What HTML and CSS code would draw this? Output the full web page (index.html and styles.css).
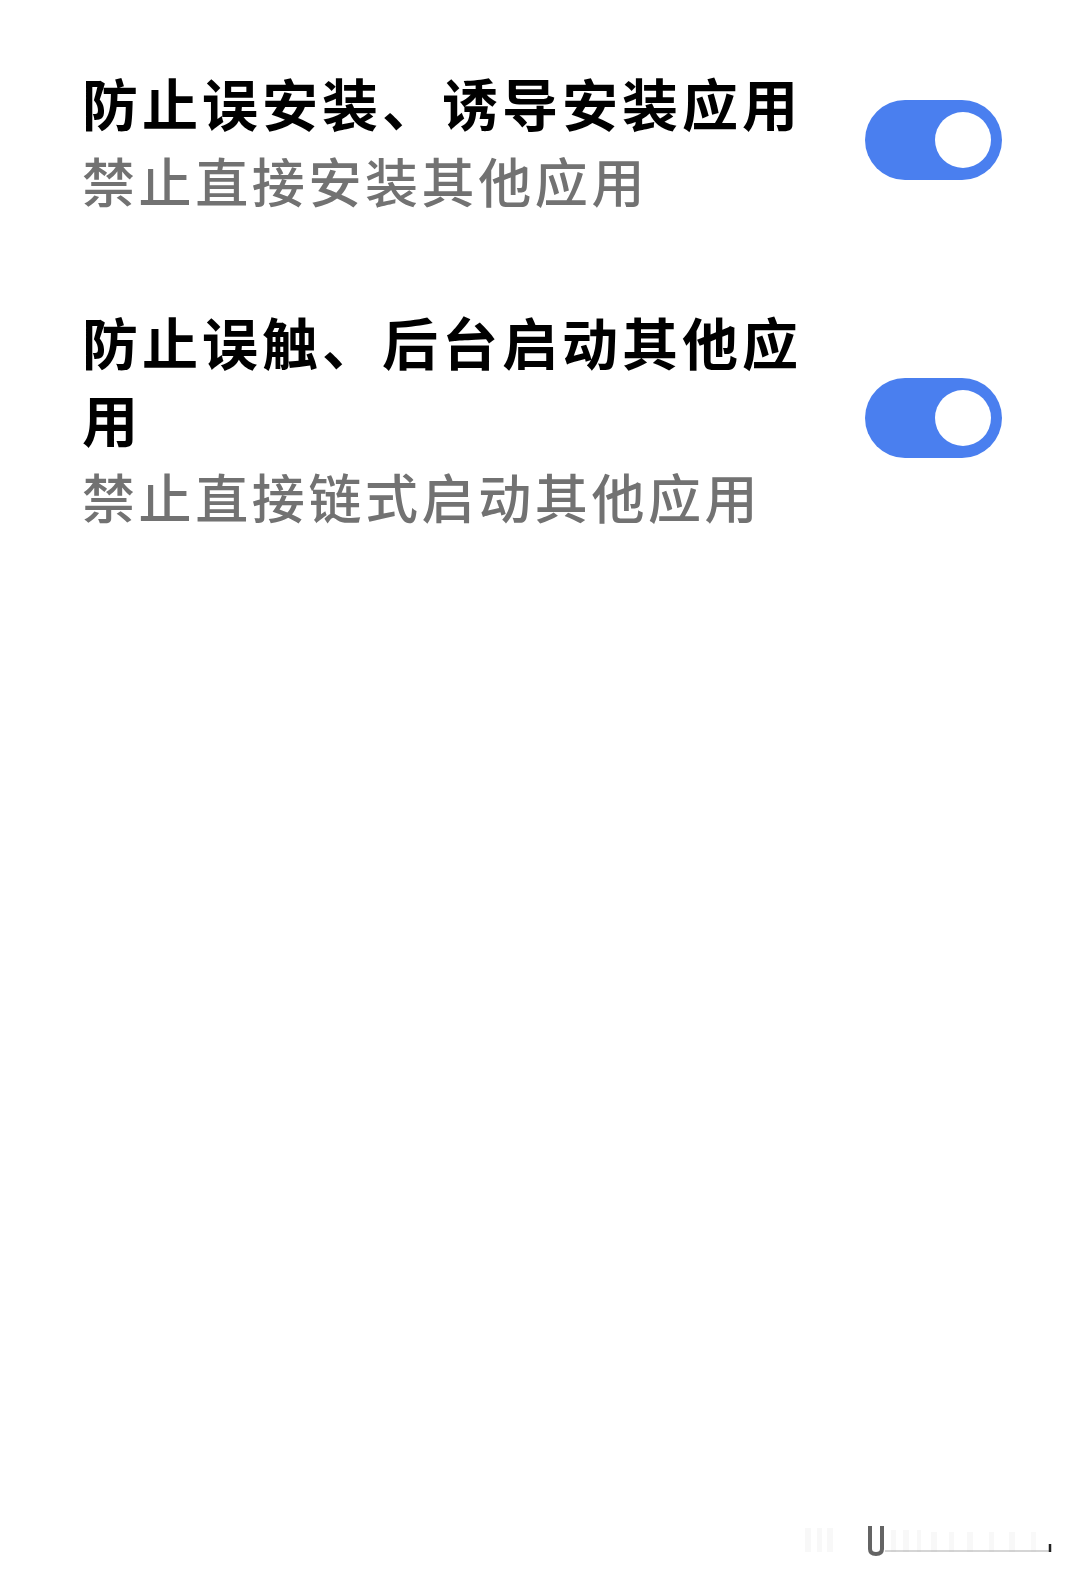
FILE: index.html
```html
<!DOCTYPE html>
<html lang="zh-CN">
<head>
  <meta charset="UTF-8">
  <title>应用安装与启动</title>
  <link rel="stylesheet" href="styles.css">
</head>
<body>
  <div class="settings-list">
    <div class="setting-row">
      <div class="setting-text">
        <div class="setting-title">防止误安装、诱导安装应用</div>
        <div class="setting-desc">禁止直接安装其他应用</div>
      </div>
      <label class="switch">
        <input type="checkbox" checked>
        <span class="track"></span>
      </label>
    </div>

    <div class="setting-row">
      <div class="setting-text">
        <div class="setting-title">防止误触、后台启动其他应用</div>
        <div class="setting-desc">禁止直接链式启动其他应用</div>
      </div>
      <label class="switch">
        <input type="checkbox" checked>
        <span class="track"></span>
      </label>
    </div>
  </div>

  <!-- faint stamp in the lower right corner -->
  <svg class="stamp" width="260" height="40" viewBox="0 0 260 40">
    <g fill="#000" opacity="0.025">
      <rect x="2" y="8" width="6" height="24"/>
      <rect x="14" y="8" width="5" height="24"/>
      <rect x="24" y="8" width="6" height="24"/>
      <rect x="88" y="10" width="5" height="22"/>
      <rect x="100" y="10" width="6" height="22"/>
      <rect x="114" y="10" width="4" height="22"/>
      <rect x="128" y="12" width="6" height="20"/>
      <rect x="146" y="12" width="5" height="20"/>
      <rect x="164" y="12" width="6" height="20"/>
      <rect x="186" y="12" width="5" height="20"/>
      <rect x="206" y="12" width="6" height="20"/>
      <rect x="228" y="12" width="5" height="20"/>
    </g>
    <path d="M67 6 V29 Q67 34 73 34 Q79 34 79 29 V6" fill="none" stroke="#222" stroke-width="4" opacity="0.7"/>
    <path d="M82 31 H246" stroke="#999" stroke-width="2" opacity="0.4"/>
    <path d="M247 24 V32" stroke="#222" stroke-width="2.5"/>
  </svg>
</body>
</html>
```

FILE: styles.css
```css
body {
  margin: 0;
  background: #fff;
  font-family: "Noto Sans CJK SC", "Noto Sans", sans-serif;
  color: #000;
}

.settings-list {
  padding: 63px 0 0 82px;
  display: flex;
  flex-direction: column;
  gap: 82px;
}

.setting-row {
  display: flex;
  align-items: center;
}

.setting-text {
  width: 760px;
}

.setting-title {
  font-size: 56px;
  font-weight: 700;
  line-height: 77px;
  letter-spacing: 4px;
}

.setting-desc {
  font-size: 53px;
  font-weight: 500;
  line-height: 80px;
  letter-spacing: 3.6px;
  color: #727272;
}

/* switch */
.switch {
  margin: 0 0 3px 23px;
  cursor: pointer;
}
.switch input {
  display: none;
}
.track {
  display: block;
  position: relative;
  width: 137px;
  height: 80px;
  border-radius: 40px;
  background: #cfd3da;
}
.track::after {
  content: "";
  position: absolute;
  top: 12px;
  left: 12px;
  width: 56px;
  height: 56px;
  border-radius: 50%;
  background: #fff;
}
.switch input:checked + .track {
  background: #4a7fef;
}
.switch input:checked + .track::after {
  left: 70px;
}

.stamp {
  position: absolute;
  left: 803px;
  top: 1520px;
}
```
